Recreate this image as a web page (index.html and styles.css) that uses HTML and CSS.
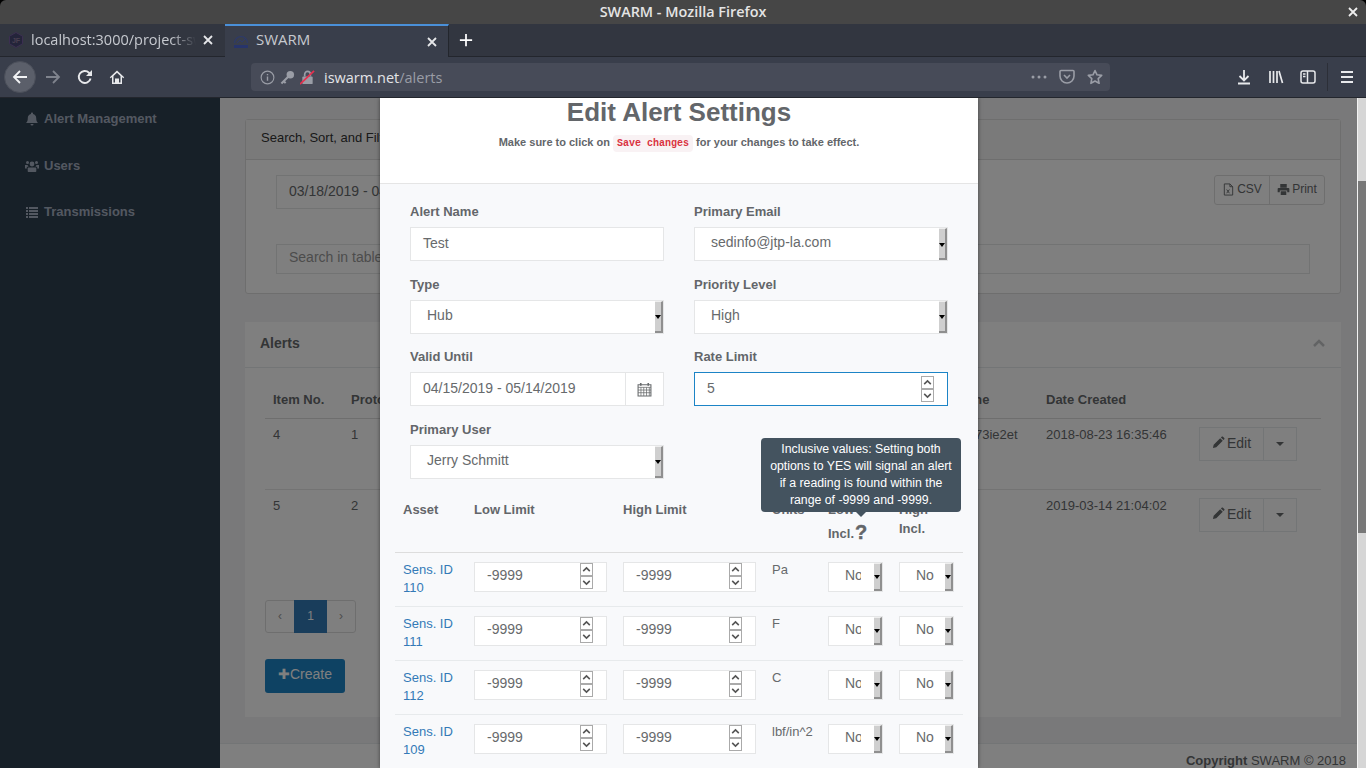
FILE: index.html
```html
<!DOCTYPE html>
<html lang="en">
<head>
  <meta charset="UTF-8">
  <title>SWARM - Mozilla Firefox</title>
  <link rel="stylesheet" href="styles.css">
</head>
<body>

  <svg class="defs" width="0" height="0">
    <symbol id="up" viewBox="0 0 10 10"><path d="M2 6.5l3-3 3 3" fill="none" stroke="#555" stroke-width="1.4"/></symbol>
    <symbol id="down" viewBox="0 0 10 10"><path d="M2 3.5l3 3 3-3" fill="none" stroke="#555" stroke-width="1.4"/></symbol>
    <symbol id="close" viewBox="0 0 12 12"><path d="M2 2l8 8M10 2l-8 8" fill="none" stroke="currentColor" stroke-width="1.8"/></symbol>
    <symbol id="pencil" viewBox="0 0 14 14"><path d="M1 13l.8-3.6 7-7 2.8 2.8-7 7zM9.6 1.6l.8-.8c.4-.4 1-.4 1.4 0l1.4 1.4c.4.4.4 1 0 1.4l-.8.8z" fill="currentColor"/></symbol>
  </svg>

  <div class="window">

    <!-- title bar -->
    <div class="titlebar">
      <span class="title-text">SWARM - Mozilla Firefox</span>
      <svg class="win-close"><use href="#close"/></svg>
    </div>

    <!-- tabs -->
    <div class="tabs">
      <div class="tab">
        <svg class="favicon" viewBox="0 0 16 16"><path d="M8 .5l6.5 3.7v7.6L8 15.5l-6.5-3.7V4.2z" fill="#24243a" stroke="#3c2f52"/><text x="8" y="11" text-anchor="middle" class="fav-text">JF</text></svg>
        <span class="tab-label tab-fade">localhost:3000/project-swarm</span>
        <svg class="tab-close"><use href="#close"/></svg>
      </div>
      <div class="tab tab-active">
        <svg class="favicon" viewBox="0 0 16 16"><path d="M1.5 9a6.5 6.5 0 0 1 13 0" fill="none" stroke="#2d3a6c" stroke-width="1.2"/><path d="M4 9l3-3 2 2 3-3" fill="none" stroke="#2d3a6c"/><rect x="1" y="11" width="14" height="3" fill="#27346b"/></svg>
        <span class="tab-label">SWARM</span>
        <svg class="tab-close"><use href="#close"/></svg>
      </div>
      <div class="new-tab">
        <svg viewBox="0 0 16 16"><path d="M8 1v14M1 8h14" stroke="#fff" stroke-width="2"/></svg>
      </div>
    </div>

    <!-- toolbar -->
    <div class="toolbar">
      <div class="nav-back">
        <svg viewBox="0 0 16 16"><path d="M15 8H2M8 2L2 8l6 6" fill="none" stroke="#f2f3f5" stroke-width="1.8"/></svg>
      </div>
      <svg class="nav-icon dim" viewBox="0 0 16 16"><path d="M1 8h13M8 2l6 6-6 6" fill="none" stroke="currentColor" stroke-width="1.8"/></svg>
      <svg class="nav-icon" viewBox="0 0 16 16"><path d="M13.6 9.5A6 6 0 1 1 12 3.7L14 5.5" fill="none" stroke="currentColor" stroke-width="1.9"/><path d="M15 1v6H9z" fill="currentColor"/></svg>
      <svg class="nav-icon" viewBox="0 0 16 16"><path d="M8 1.5L.8 8.2l1 1L3 8.1V15h10V8.1l1.2 1.1 1-1zM4.5 13.5V7L8 3.7 11.5 7v6.5H10V9.5H6v4z" fill="currentColor" fill-rule="evenodd"/></svg>

      <div class="urlbar">
        <svg class="url-icon" viewBox="0 0 16 16"><circle cx="8" cy="8" r="6.8" fill="none" stroke="currentColor" stroke-width="1.2"/><path d="M8 7v4.5M8 4.2v1.5" stroke="currentColor" stroke-width="1.5"/></svg>
        <svg class="url-icon" viewBox="0 0 16 16"><circle cx="11" cy="5" r="4" fill="currentColor"/><path d="M9 7L1.5 14.5M4 12l2 2" fill="none" stroke="currentColor" stroke-width="2.2"/></svg>
        <svg class="url-icon lock" viewBox="0 0 16 16"><rect x="2.5" y="7" width="11" height="8" rx="1" fill="currentColor"/><path d="M5 7V4.5a3 3 0 0 1 6 0V7" fill="none" stroke="currentColor" stroke-width="1.8"/><path d="M0 15L15 1" stroke="#e8304f" stroke-width="1.8"/></svg>
        <span class="url-text">iswarm.net<span class="url-path">/alerts</span></span>
        <span class="url-actions">
          <svg class="url-dots" viewBox="0 0 16 4"><circle cx="2" cy="2" r="1.5"/><circle cx="8" cy="2" r="1.5"/><circle cx="14" cy="2" r="1.5"/></svg>
          <svg class="url-icon" viewBox="0 0 16 16"><path d="M2 1.5h12c.6 0 1 .4 1 1V7a7 7 0 0 1-14 0V2.5c0-.6.4-1 1-1z" fill="none" stroke="currentColor" stroke-width="1.6"/><path d="M5 6l3 3 3-3" fill="none" stroke="currentColor" stroke-width="1.6"/></svg>
          <svg class="url-icon" viewBox="0 0 16 16"><path d="M8 1.5l2 4.3 4.7.6-3.5 3.2.9 4.7L8 12l-4.100 2.300.9-4.700-3.500-3.200 4.700-.6z" fill="none" stroke="currentColor" stroke-width="1.6" stroke-linejoin="round"/></svg>
        </span>
      </div>

      <div class="tool-icons">
        <svg class="nav-icon" viewBox="0 0 16 16"><path d="M8 1v10M3.5 7L8 11.5 12.5 7M2 14.5h12" fill="none" stroke="currentColor" stroke-width="1.8"/></svg>
        <svg class="nav-icon" viewBox="0 0 16 16"><path d="M2 2v12M5.5 2v12M9 2v12M11 2l3.5 12" fill="none" stroke="currentColor" stroke-width="1.7"/></svg>
        <svg class="nav-icon" viewBox="0 0 16 16"><rect x="1" y="2" width="14" height="12" rx="2" fill="none" stroke="currentColor" stroke-width="1.5"/><path d="M7.5 2v12M3 5h2.5M3 7.5h2.500" fill="none" stroke="currentColor" stroke-width="1.5"/></svg>
        <span class="tool-sep"></span>
        <svg class="nav-icon" viewBox="0 0 16 16"><path d="M2 3h12M2 8h12M2 13h12" stroke="currentColor" stroke-width="1.8"/></svg>
      </div>
    </div>

    <!-- page -->
    <div class="viewport">
      <div class="page">
        <aside class="sidebar">
          <div class="side-item">
            <svg class="side-icon" viewBox="0 0 14 14"><path d="M7 .5c.6 0 1 .4 1 1v.4c2 .4 3.2 2 3.2 4 0 3 .8 4 1.8 5H1c1-1 1.8-2 1.8-5 0-2 1.2-3.6 3.2-4v-.4c0-.6.4-1 1-1zM5.5 12h3a1.5 1.5 0 0 1-3 0z" fill="currentColor"/></svg>
            Alert Management
          </div>
          <div class="side-item">
            <svg class="side-icon" viewBox="0 0 14 14"><circle cx="7" cy="5" r="2.4" fill="currentColor"/><circle cx="2.5" cy="3.5" r="1.5" fill="currentColor"/><circle cx="11.5" cy="3.5" r="1.5" fill="currentColor"/><path d="M3.5 8.5h7c.4 0 .8.4.8.8V12c0 .6-.4 1-1 1H3.7c-.6 0-1-.4-1-1V9.3c0-.4.4-.8.8-.8zM0 6h2.500l1 1.700H1.800v1.700H0zM14 6h-2.500l-1 1.700h1.700v1.700H14z" fill="currentColor"/></svg>
            Users
          </div>
          <div class="side-item">
            <svg class="side-icon" viewBox="0 0 14 14"><path d="M1 2h2v2H1zM4 2h9v2H4zM1 5h2v2H1zM4 5h9v2H4zM1 8h2v2H1zM4 8h9v2H4zM1 11h2v2H1zM4 11h9v2H4z" fill="currentColor"/></svg>
            Transmissions
          </div>
        </aside>

        <main class="main">
          <div class="content">
            <section class="panel panel-filter">
              <div class="panel-heading">Search, Sort, and Filter</div>
              <div class="panel-body">
                <div class="filter-row">
                  <div class="field date-field">03/18/2019 - 04/17/2019</div>
                  <div class="btn-group">
                    <span class="btn-flat btn-csv">
                      <svg class="fa" viewBox="0 0 14 14"><path d="M2.5 1h6l3 3v9h-9zM8.5 1v3h3" fill="none" stroke="currentColor"/><path d="M5 7l3 4M8 7l-3 4" stroke="currentColor"/></svg>CSV
                    </span>
                    <span class="btn-flat btn-print">
                      <svg class="fa" viewBox="0 0 14 14"><path d="M3.5 1h7v4h-7zM1.5 5.5h11c.4 0 .8.4.8.8V10H11V8H3v2H.7V6.3c0-.4.4-.8.8-.8zM4 9h6v4H4z" fill="currentColor"/></svg>Print
                    </span>
                  </div>
                </div>
                <div class="field search-field">Search in table...</div>
              </div>
            </section>

            <section class="panel panel-alerts">
              <div class="alerts-heading">
                <span>Alerts</span>
                <svg class="collapse" viewBox="0 0 14 10"><path d="M2 8l5-5 5 5" fill="none" stroke="currentColor" stroke-width="2.5"/></svg>
              </div>
              <div class="alerts-body">
                <table class="alert-table">
                  <colgroup>
                    <col class="c-item"><col class="c-proto"><col class="c-name"><col class="c-date"><col class="c-act">
                  </colgroup>
                  <thead>
                    <tr><th>Item No.</th><th>Protocol</th><th>Name</th><th>Date Created</th><th></th></tr>
                  </thead>
                  <tbody>
                    <tr>
                      <td>4</td><td>1</td><td>d7k73ie2et</td><td>2018-08-23 16:35:46</td>
                      <td>
                        <div class="edit-group">
                          <span class="edit-btn"><svg class="fa"><use href="#pencil"/></svg>Edit</span>
                          <span class="edit-caret"></span>
                        </div>
                      </td>
                    </tr>
                    <tr>
                      <td>5</td><td>2</td><td>test</td><td>2019-03-14 21:04:02</td>
                      <td>
                        <div class="edit-group">
                          <span class="edit-btn"><svg class="fa"><use href="#pencil"/></svg>Edit</span>
                          <span class="edit-caret"></span>
                        </div>
                      </td>
                    </tr>
                  </tbody>
                </table>
                <div class="pager">
                  <span class="page-link">‹</span>
                  <span class="page-link page-on">1</span>
                  <span class="page-link">›</span>
                </div>
                <span class="create-btn">✚Create</span>
              </div>
            </section>
          </div>

          <footer class="footer"><b>Copyright</b> SWARM © 2018</footer>
        </main>
      </div>

      <div class="scrollbar"><div class="scroll-thumb"></div></div>

      <div class="backdrop"></div>

      <!-- modal -->
      <div class="modal">
        <div class="modal-head">
          <h1>Edit Alert Settings</h1>
          <p>Make sure to click on <code>Save changes</code> for your changes to take effect.</p>
        </div>

        <div class="modal-body">
          <div class="form-grid">
            <div class="group">
              <label>Alert Name</label>
              <div class="input">Test</div>
            </div>
            <div class="group">
              <label>Primary Email</label>
              <div class="input select">sedinfo@jtp-la.com<span class="sel-btn"></span></div>
            </div>
            <div class="group">
              <label>Type</label>
              <div class="input select">Hub<span class="sel-btn"></span></div>
            </div>
            <div class="group">
              <label>Priority Level</label>
              <div class="input select">High<span class="sel-btn"></span></div>
            </div>
            <div class="group">
              <label>Valid Until</label>
              <div class="input date">
                <span class="date-text">04/15/2019 - 05/14/2019</span>
                <span class="date-addon">
                  <svg class="fa" viewBox="0 0 14 14"><path d="M1 2.5h12V13H1z" fill="none" stroke="currentColor"/><path d="M1 5h12M1 7.5h12M1 10h12M3.7 5v8M6.3 5v8M8.9 5v8M11.5 5v8" stroke="currentColor" stroke-width=".7"/><path d="M3.5 1v2.5M10.5 1v2.5" stroke="currentColor" stroke-width="1.5"/></svg>
                </span>
              </div>
            </div>
            <div class="group">
              <label>Rate Limit</label>
              <div class="input number focus">5
                <span class="spin">
                  <span class="spin-box"><svg><use href="#up"/></svg></span>
                  <span class="spin-box"><svg><use href="#down"/></svg></span>
                </span>
              </div>
            </div>
            <div class="group">
              <label>Primary User</label>
              <div class="input select">Jerry Schmitt<span class="sel-btn"></span></div>
            </div>
          </div>

          <table class="asset-table">
            <colgroup>
              <col class="a-asset"><col class="a-limit"><col class="a-limit"><col class="a-unit"><col class="a-incl"><col class="a-incl2">
            </colgroup>
            <thead>
              <tr>
                <th>Asset</th><th>Low Limit</th><th>High Limit</th><th>Units</th>
                <th>Low Incl.<b class="help">?</b></th>
                <th>High Incl.</th>
              </tr>
            </thead>
            <tbody>
              <tr>
                <td><a class="sens">Sens. ID 110</a></td>
                <td><div class="input small number">-9999<span class="spin"><span class="spin-box"><svg><use href="#up"/></svg></span><span class="spin-box"><svg><use href="#down"/></svg></span></span></div></td>
                <td><div class="input small number">-9999<span class="spin"><span class="spin-box"><svg><use href="#up"/></svg></span><span class="spin-box"><svg><use href="#down"/></svg></span></span></div></td>
                <td>Pa</td>
                <td><div class="input small yn"><span class="yn-clip">No</span><span class="sel-btn"></span></div></td>
                <td><div class="input small yn">No<span class="sel-btn"></span></div></td>
              </tr>
              <tr>
                <td><a class="sens">Sens. ID 111</a></td>
                <td><div class="input small number">-9999<span class="spin"><span class="spin-box"><svg><use href="#up"/></svg></span><span class="spin-box"><svg><use href="#down"/></svg></span></span></div></td>
                <td><div class="input small number">-9999<span class="spin"><span class="spin-box"><svg><use href="#up"/></svg></span><span class="spin-box"><svg><use href="#down"/></svg></span></span></div></td>
                <td>F</td>
                <td><div class="input small yn"><span class="yn-clip">No</span><span class="sel-btn"></span></div></td>
                <td><div class="input small yn">No<span class="sel-btn"></span></div></td>
              </tr>
              <tr>
                <td><a class="sens">Sens. ID 112</a></td>
                <td><div class="input small number">-9999<span class="spin"><span class="spin-box"><svg><use href="#up"/></svg></span><span class="spin-box"><svg><use href="#down"/></svg></span></span></div></td>
                <td><div class="input small number">-9999<span class="spin"><span class="spin-box"><svg><use href="#up"/></svg></span><span class="spin-box"><svg><use href="#down"/></svg></span></span></div></td>
                <td>C</td>
                <td><div class="input small yn"><span class="yn-clip">No</span><span class="sel-btn"></span></div></td>
                <td><div class="input small yn">No<span class="sel-btn"></span></div></td>
              </tr>
              <tr>
                <td><a class="sens">Sens. ID 109</a></td>
                <td><div class="input small number">-9999<span class="spin"><span class="spin-box"><svg><use href="#up"/></svg></span><span class="spin-box"><svg><use href="#down"/></svg></span></span></div></td>
                <td><div class="input small number">-9999<span class="spin"><span class="spin-box"><svg><use href="#up"/></svg></span><span class="spin-box"><svg><use href="#down"/></svg></span></span></div></td>
                <td>lbf/in^2</td>
                <td><div class="input small yn"><span class="yn-clip">No</span><span class="sel-btn"></span></div></td>
                <td><div class="input small yn">No<span class="sel-btn"></span></div></td>
              </tr>
            </tbody>
          </table>
        </div>

        <div class="tooltip">Inclusive values: Setting both options to YES will signal an alert if a reading is found within the range of -9999 and -9999.</div>
      </div>
    </div>
  </div>

</body>
</html>
```

FILE: styles.css
```css
html, body {
  margin: 0;
  padding: 0;
  background: #000;
  overflow: hidden;
}

.defs {
  position: absolute;
}

.window {
  width: 1366px;
  height: 768px;
  display: flex;
  flex-direction: column;
  font-family: "Open Sans", "Noto Sans", sans-serif;
  overflow: hidden;
}

/* browser chrome */
.titlebar {
  flex: 0 0 24px;
  background: #464646;
  border-radius: 6px 6px 0 0;
  display: flex;
  align-items: center;
  justify-content: center;
  position: relative;
}

.title-text {
  color: #e4e4e4;
  font-size: 14.4px;
  font-weight: 600;
  padding-bottom: 2px;
}

.win-close {
  position: absolute;
  right: 7px;
  top: 6px;
  width: 12px;
  height: 12px;
  color: #eee;
}

.tabs {
  flex: 0 0 33px;
  background: #323640;
  display: flex;
  border-bottom: 1px solid #23262d;
  box-sizing: border-box;
}

.tab {
  width: 225px;
  display: flex;
  align-items: center;
  padding: 0 11px 0 8px;
  box-sizing: border-box;
  color: #c6c9cf;
}

.tab-active {
  width: 224px;
  background: #393e4b;
  border-top: 2px solid #4a90d9;
  border-right: 1px solid #23262d;
  margin-bottom: -1px;
  padding-right: 10px;
}

.favicon {
  width: 16px;
  height: 16px;
  flex: none;
}

.fav-text {
  font: bold 7px "Liberation Sans", sans-serif;
  fill: #4a4050;
}

.tab-label {
  margin-left: 7px;
  font-size: 14.5px;
  line-height: 18px;
  flex: 1;
  white-space: nowrap;
  overflow: hidden;
}

.tab-active .tab-label {
  font-size: 15px;
  padding-bottom: 5px;
}

.tab-fade {
  -webkit-mask-image: linear-gradient(to right, #000 85%, transparent 100%);
  mask-image: linear-gradient(to right, #000 85%, transparent 100%);
}

.tab-close {
  width: 12px;
  height: 12px;
  flex: none;
  margin-left: 6px;
  color: #e6e7ea;
}

.new-tab {
  width: 34px;
  display: flex;
  align-items: center;
  justify-content: center;
}

.new-tab svg {
  width: 14px;
  height: 14px;
}

.toolbar {
  flex: 0 0 41px;
  background: #393e4b;
  border-bottom: 1px solid #23262d;
  box-sizing: border-box;
  display: flex;
  align-items: center;
  padding: 0 11px 0 4px;
  color: #e8e9ec;
}

.nav-back {
  width: 32px;
  height: 32px;
  border-radius: 50%;
  background: #5b5f6a;
  border: 1px solid #4b4f5a;
  box-sizing: border-box;
  display: flex;
  align-items: center;
  justify-content: center;
  margin-right: 9px;
}

.nav-back svg {
  width: 16px;
  height: 16px;
}

.nav-icon {
  width: 16px;
  height: 16px;
  flex: none;
  margin-right: 16px;
}

.dim {
  color: #7f838d;
}

.urlbar {
  width: 859px;
  height: 28px;
  background: #474b58;
  border-radius: 4px;
  margin-left: 110px;
  flex: none;
  display: flex;
  align-items: center;
  padding: 0 7px 0 9px;
  box-sizing: border-box;
  color: #9a9da6;
}

.url-icon {
  width: 15px;
  height: 15px;
  flex: none;
  margin-right: 5px;
}

.lock {
  margin-right: 9px;
}

.url-text {
  font-size: 14.5px;
  color: #e3e4e7;
}

.url-path {
  color: #9a9da6;
}

.url-actions {
  margin-left: auto;
  display: flex;
  align-items: center;
  gap: 8px;
}

.url-actions .url-icon {
  width: 16px;
  height: 16px;
  margin: 0 0 0 4px;
}

.url-dots {
  width: 16px;
  height: 4px;
  fill: currentColor;
}

.tool-icons {
  margin-left: auto;
  display: flex;
  align-items: center;
}

.tool-sep {
  width: 1px;
  height: 28px;
  background: #2c2f38;
  margin: 0 11px 0 -5px;
}

.tool-icons .nav-icon:last-child {
  margin-right: 0;
}

/* page under the dialog */
.viewport {
  flex: 1;
  display: flex;
  position: relative;
  overflow: hidden;
  font-family: "Liberation Sans", Arial, sans-serif;
  font-size: 13px;
  color: #676a6c;
}

.page {
  flex: 1;
  display: flex;
  min-width: 0;
  background: #f3f3f4;
}

.sidebar {
  flex: 0 0 220px;
  background: #2f4050;
  padding-top: 12px;
  color: #a7b1c2;
  font-weight: bold;
}

.side-item {
  height: 18px;
  line-height: 18px;
  margin-bottom: 28.5px;
  padding-left: 25px;
  display: flex;
  align-items: center;
}

.side-icon {
  width: 14px;
  height: 14px;
  margin-right: 5px;
}

.main {
  flex: 1;
  min-width: 0;
  display: flex;
  flex-direction: column;
}

.content {
  flex: 1;
  min-height: 0;
  padding: 21px 16px 0 25px;
}

.panel {
  background: #fff;
  box-sizing: border-box;
}

.panel-filter {
  height: 175px;
  border: 1px solid #ddd;
  border-radius: 3px;
  margin-bottom: 28px;
}

.panel-heading {
  height: 40px;
  line-height: 36px;
  padding-left: 15px;
  background: #f5f5f5;
  border-bottom: 1px solid #ddd;
  box-sizing: border-box;
  color: #333;
}

.panel-body {
  padding: 15px 30px;
}

.filter-row {
  display: flex;
  justify-content: space-between;
  align-items: flex-start;
  margin-right: -15px;
  margin-bottom: 35px;
}

.field {
  border: 1px solid #e5e6e7;
  box-sizing: border-box;
  font-size: 14px;
  padding-left: 12px;
  color: #676a6c;
}

.date-field {
  width: 300px;
  height: 34px;
  line-height: 30px;
}

.search-field {
  height: 30px;
  line-height: 24px;
  color: #999;
}

.btn-group {
  display: flex;
  height: 30px;
  border: 1px solid #ddd;
  border-radius: 3px;
  box-sizing: border-box;
  font-size: 12px;
}

.btn-flat {
  display: flex;
  align-items: center;
  justify-content: center;
  padding-bottom: 2px;
  box-sizing: border-box;
  color: #676a6c;
}

.btn-csv {
  width: 54px;
}

.btn-print {
  width: 55px;
  border-left: 1px solid #ddd;
}

.fa {
  width: 13px;
  height: 13px;
  margin-right: 2px;
  flex: none;
}

.panel-alerts {
  height: 395px;
}

.alerts-heading {
  height: 46px;
  border-bottom: 1px solid #e7eaec;
  box-sizing: border-box;
  display: flex;
  align-items: center;
  justify-content: space-between;
  padding: 0 15px 4px;
  font-size: 14px;
  font-weight: bold;
}

.collapse {
  width: 14px;
  height: 10px;
  color: #c4c6c8;
}

.alerts-body {
  padding: 20px 20px 0;
}

.alert-table {
  width: 1056px;
  border-collapse: collapse;
  table-layout: fixed;
}

.c-item { width: 78px; }
.c-name { width: 92px; }
.c-date { width: 153px; }
.c-act { width: 130px; }

.alert-table th {
  text-align: left;
  padding: 3px 8px 9px;
  line-height: 18px;
  border-bottom: 1px solid #ddd;
}

.alert-table td {
  height: 71px;
  box-sizing: border-box;
  padding: 7px 8px;
  line-height: 18px;
  vertical-align: top;
  border-bottom: 1px solid #e7e7e7;
  white-space: nowrap;
}

.alert-table tr:last-child td {
  border-bottom: 0;
}

.edit-group {
  display: flex;
  width: 98px;
  height: 34px;
  margin-top: 1px;
  border: 1px solid #e7eaec;
  box-sizing: border-box;
  font-size: 14px;
}

.edit-btn {
  width: 64px;
  display: flex;
  align-items: center;
  justify-content: center;
  padding-bottom: 3px;
  box-sizing: border-box;
  border-right: 1px solid #e7eaec;
}

.edit-caret {
  flex: 1;
  position: relative;
}

.edit-caret::after {
  content: "";
  position: absolute;
  left: 12px;
  top: 14px;
  border: 4px solid transparent;
  border-top-color: #676a6c;
}

.pager {
  display: inline-flex;
  height: 33px;
  border: 1px solid #ddd;
  border-radius: 3px;
  box-sizing: border-box;
  margin-top: 39px;
}

.page-link {
  width: 28px;
  text-align: center;
  line-height: 31px;
  font-size: 12px;
  color: #999;
}

.page-on {
  width: 33px;
  margin: -1px 0;
  line-height: 33px;
  background: #337ab7;
  color: #fff;
}

.create-btn {
  display: block;
  width: 80px;
  height: 34px;
  margin-top: 26px;
  line-height: 30px;
  text-align: center;
  background: #1c84c6;
  border-radius: 3px;
  color: #fff;
  font-size: 14px;
}

.footer {
  flex: 0 0 25px;
  min-height: 0;
  height: 25px;
  box-sizing: border-box;
  border-top: 1px solid #e7eaec;
  background: #fff;
  text-align: right;
  padding: 8px 11px 0 0;
  line-height: 18px;
  color: #676a6c;
}

.scrollbar {
  flex: 0 0 8px;
  background: #d6d6d6;
  border-left: 1px solid #f2f2f2;
}

.scroll-thumb {
  margin-top: 83px;
  height: 352px;
  background: #787878;
}

.backdrop {
  position: absolute;
  left: 0;
  top: 0;
  bottom: 0;
  right: 9px;
  background: rgba(0, 0, 0, 0.5);
}

/* dialog */
.modal {
  position: absolute;
  left: 380px;
  top: 0;
  bottom: 0;
  width: 598px;
  background: #f8f9fb;
  box-shadow: 0 0 4px rgba(0, 0, 0, 0.5);
}

.modal-head {
  height: 86px;
  background: #fff;
  border-bottom: 1px solid #e5e5e5;
  box-sizing: border-box;
  text-align: center;
  color: #63666a;
}

.modal-head h1 {
  margin: 0;
  font-size: 26px;
  line-height: 28px;
  font-weight: bold;
}

.modal-head p {
  margin: 7px 0 0;
  font-size: 11px;
  font-weight: bold;
  line-height: 18px;
}

.modal-head code {
  font-family: "Liberation Mono", monospace;
  font-size: 10px;
  font-weight: bold;
  color: #d9333f;
  background: #f9f2f4;
  border-radius: 4px;
  padding: 3px 4px;
}

.modal-body {
  padding: 18px 15px 0;
}

.form-grid {
  display: grid;
  grid-template-columns: 254px 254px;
  column-gap: 30px;
  row-gap: 13.67px;
  margin-left: 15px;
}

.group label {
  display: block;
  height: 18px;
  line-height: 20px;
  margin-bottom: 7px;
  font-weight: bold;
  color: #63666a;
}

.input {
  height: 34px;
  background: #fff;
  border: 1px solid #e5e6e7;
  box-sizing: border-box;
  font-size: 14px;
  line-height: 18px;
  color: #676a6c;
  padding-left: 12px;
  padding-bottom: 2px;
  display: flex;
  align-items: center;
}

.select {
  padding-left: 16px;
  padding-bottom: 0;
  padding-top: 7px;
  line-height: 14px;
  align-items: flex-start;
}

.sel-btn {
  margin-left: auto;
  width: 8px;
  height: 100%;
  flex: none;
  box-sizing: border-box;
  background: #cfcfcf;
  border-right: 2px solid #8f8f8f;
  border-bottom: 2px solid #8f8f8f;
  border-top: 1px solid #eee;
  position: relative;
}

.sel-btn::after {
  content: "";
  position: absolute;
  left: 0;
  top: 50%;
  margin-top: -1px;
  border: 3px solid transparent;
  border-top: 4px solid #000;
  border-bottom: 0;
}

.select .sel-btn {
  height: 32px;
  margin-top: -7px;
}

.date {
  padding: 0;
}

.date-text {
  flex: 1;
  padding-left: 12px;
  padding-bottom: 2px;
}

.date-addon {
  flex: 0 0 37px;
  height: 100%;
  border-left: 1px solid #e5e6e7;
  display: flex;
  align-items: center;
  justify-content: center;
}

.date-addon .fa {
  width: 15px;
  height: 15px;
  margin: 0;
}

.focus {
  border-color: #1c84c6;
}

.spin {
  margin-left: auto;
  margin-right: 13px;
  display: flex;
  flex-direction: column;
  position: relative;
  top: 1px;
}

.spin-box {
  width: 13px;
  height: 13px;
  border: 1px solid #aaa;
  box-sizing: border-box;
  background: #fff;
  display: flex;
}

.spin-box svg {
  width: 11px;
  height: 11px;
}

.asset-table {
  width: 568px;
  margin-top: 13.5px;
  border-collapse: collapse;
  table-layout: fixed;
}

.a-asset { width: 71px; }
.a-limit { width: 149px; }
.a-unit { width: 56px; }
.a-incl { width: 71px; }
.a-incl2 { width: 72px; }

.asset-table th {
  text-align: left;
  vertical-align: top;
  padding: 8px;
  line-height: 19px;
  height: 60px;
  box-sizing: border-box;
  color: #63666a;
  border-bottom: 1px solid #ddd;
}

.help {
  display: inline-block;
  font-size: 20px;
  line-height: 20px;
  margin-left: 1px;
  vertical-align: -1px;
  margin-top: 3px;
  -webkit-text-stroke: 0.4px #63666a;
}

.asset-table td {
  height: 54px;
  box-sizing: border-box;
  padding: 8px;
  vertical-align: top;
  line-height: 18px;
  border-bottom: 1px solid #e7eaec;
}

.sens {
  color: #337ab7;
}

.small {
  height: 30px;
  margin-top: 1px;
  padding-bottom: 3px;
}

.yn {
  width: 55px;
  padding-left: 16px;
  padding-bottom: 0;
  align-items: flex-start;
  padding-top: 3px;
}

.yn .sel-btn {
  height: 28px;
  margin-top: -3px;
}

.yn-clip {
  width: 16px;
  overflow: hidden;
  flex: none;
}

.tooltip {
  position: absolute;
  left: 381px;
  top: 340px;
  width: 200px;
  box-sizing: border-box;
  padding: 3px 6px;
  background: #44535f;
  border-radius: 4px;
  color: #fff;
  font-size: 12.3px;
  line-height: 17px;
  text-align: center;
}

.tooltip::after {
  content: "";
  position: absolute;
  left: 95px;
  bottom: -5px;
  border: 5px solid transparent;
  border-top-color: #44535f;
  border-bottom: 0;
}
```
